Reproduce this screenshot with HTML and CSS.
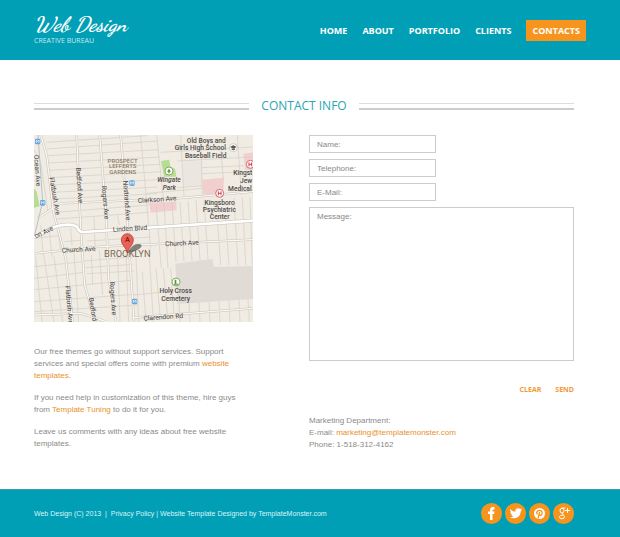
FILE: index.html
```html
<!DOCTYPE html>
<html lang="en">
<head>
<meta charset="utf-8">
<title>Web Design - Contacts</title>
<link rel="stylesheet" href="styles.css">
</head>
<body>
<header class="header">
  <a class="brand" href="#">
    <span class="brand-name">Web Design</span>
    <span class="brand-tag">CREATIVE BUREAU</span>
  </a>
  <nav class="nav">
    <a href="#">HOME</a>
    <a href="#">ABOUT</a>
    <a href="#">PORTFOLIO</a>
    <a href="#">CLIENTS</a>
    <a class="current" href="#">CONTACTS</a>
  </nav>
</header>

<main class="main">
  <h1 class="title">CONTACT INFO</h1>
  <div class="columns">
    <section>
      <svg class="map" viewBox="0 0 657 561" role="img" aria-label="Map of Brooklyn">
        <rect width="657" height="561" fill="#f0ece3"/>
        <g fill="#e0dcd5"><path d="M424 386L535 372L540 396L657 393V492L430 507Z"/><path d="M448 72L505 78V150L448 155Z" fill="#ebe6df"/></g>
        <g fill="#b9dc95"><path d="M381 78L405 74L410 96L423 101L427 125L390 125Z"/><path d="M0 160L8 170L17 214L0 218Z"/></g>
        <g fill="#f1cfcf"><path d="M505 134L570 128L568 176L508 178Z"/><path d="M345 203L427 199L428 226L350 233Z"/><path d="M628 56L657 52V106L634 104Z"/></g>
        <g fill="none" stroke="#d3cdc4" stroke-width="2">
          <path d="M35 22L340 2M38 42L370 18M40 62L375 44M42 84L376 66M44 106L378 88M46 128L382 110M50 150L380 134M54 172L372 156M58 192L370 176M64 232L345 210M68 252L345 232M160 318L350 306"/>
          <path d="M320 0L350 340M368 0L388 190M440 0L450 185M500 0L505 180M560 40L568 130M610 0L622 180M380 52L657 36M430 78L650 66M505 98L630 92M505 116L630 110M430 158L505 152M340 175L505 160"/>
          <path d="M366 210L382 400M390 205L402 400M414 202L426 380M438 200L450 380M462 198L474 378M486 196L498 376M510 194L522 374M550 250L560 390M575 250L585 390M600 190L612 390M625 188L635 390M648 188L655 390"/>
          <path d="M305 340L314 561M325 410L336 561M345 340L358 561M366 400L378 540M388 400L400 540M410 400L420 540M435 507L438 561M465 505L468 561M495 503L498 561M525 501L528 561M555 499L558 561M585 497L588 561M615 495L618 561M642 493L646 561"/>
          <path d="M172 360L176 450M196 345L206 480M250 340L258 561M276 350L284 561M30 365L60 561M60 365L86 561M5 365L24 561M120 350L134 561M0 395L150 380M0 430L150 412M0 464L290 436M0 500L300 478M0 530L310 510M150 378L295 366M155 398L295 388M158 416L300 408M300 480L420 468M0 310L75 302M90 320L140 316"/>
          <path d="M20 270L28 365M45 280L54 365M72 275L80 350M110 280L114 330M0 45L20 80L42 230M180 245L184 350M250 240L256 270"/>
        </g>
        <g fill="none" stroke="#c6c0b7" stroke-width="7">
          <path d="M20 0L38 60L58 230L95 370L116 561M128 0L140 280L152 450L184 561M197 0L216 240L224 430L246 561M260 0L280 260L300 561M0 355L200 335L657 314M10 250L80 205L430 190L657 170M0 540L140 535L220 561M300 548L657 520"/>
        </g>
        <g fill="none" stroke="#faf8f3" stroke-width="4">
          <path d="M20 0L38 60L58 230L95 370L116 561M128 0L140 280L152 450L184 561M197 0L216 240L224 430L246 561M260 0L280 260L300 561M0 355L200 335L657 314M10 250L80 205L430 190L657 170M0 540L140 535L220 561M300 548L657 520"/>
        </g>
        <path d="M0 308L60 276Q110 262 130 276Q134 292 150 291L657 257" fill="none" stroke="#c6c0b7" stroke-width="11"/>
        <path d="M0 308L60 276Q110 262 130 276Q134 292 150 291L657 257" fill="none" stroke="#fff" stroke-width="8"/>
        <path d="M12 0L26 200L2 300" fill="none" stroke="#b5c5bf" stroke-width="3"/>
        <g>
          <g fill="#67a5df"><rect x="3" y="11" width="16" height="17" rx="4"/><rect x="286" y="136" width="16" height="17" rx="4"/><rect x="18" y="195" width="16" height="17" rx="4"/><rect x="294" y="491" width="16" height="17" rx="4"/></g>
          <path d="M7 24V15L11 20L15 15V24M290 149V140L294 145L298 140V149M22 208V199L26 204L30 199V208M298 504V495L302 500L306 495V504" fill="none" stroke="#fff" stroke-width="2"/>
        </g>
        <g class="place">
          <text x="517" y="24">Old Boys and</text><text x="499" y="46">Girls High School</text><text x="515" y="68">Baseball Field</text>
          <text class="park" x="405" y="141">Wingate</text><text class="park" x="406" y="164">Park</text>
          <text x="557" y="210">Kingsboro</text><text x="556" y="232">Psychiatric</text><text x="557" y="253">Center</text>
          <text x="425" y="475">Holy Cross</text><text x="425" y="498">Cemetery</text>
          <text class="end" x="655" y="120">Kingst</text><text class="end" x="655" y="144">Jew</text><text class="end" x="653" y="167">Medical</text>
        </g>
        <g class="road">
          <text transform="translate(312 204) rotate(-4)">Clarkson Ave</text>
          <text transform="translate(237 290) rotate(-3)">Linden Blvd</text>
          <text transform="translate(84 353) rotate(-3)">Church Ave</text>
          <text transform="translate(394 334) rotate(-3)">Church Ave</text>
          <text transform="translate(329 557) rotate(-4)">Clarendon Rd</text>
          <text transform="translate(5 310) rotate(-25)">on Ave</text>
          <text transform="translate(46 128) rotate(80)">Flatbush Ave</text>
          <text transform="translate(126 98) rotate(86)">Bedford Ave</text>
          <text transform="translate(203 153) rotate(85)">Rogers Ave</text>
          <text transform="translate(268 137) rotate(86)">Nostrand Ave</text>
          <text transform="translate(0 60) rotate(86)">Ocean Ave</text>
          <text transform="translate(94 453) rotate(85)">Flatbush Ave</text>
          <text transform="translate(164 490) rotate(80)">Bedford</text>
          <text transform="translate(227 441) rotate(86)">Rogers Ave</text>
        </g>
        <g class="district"><text x="266" y="84">PROSPECT</text><text x="266" y="100">LEFFERTS</text><text x="266" y="116">GARDENS</text></g>
        <text class="city" x="280" y="367">BROOKLYN</text>
        <g fill="#fff" stroke-width="3">
          <circle cx="405" cy="108" r="12" stroke="#83ae5d"/><circle cx="426" cy="441" r="12" stroke="#83ae5d"/>
          <circle cx="557" cy="175" r="12" stroke="#d4656b"/><circle cx="649" cy="88" r="12" stroke="#d4656b"/>
          <circle cx="598" cy="38" r="12" stroke="#b9b4ad" stroke-width="2"/>
        </g>
        <path d="M405 101L399 110H411ZM403 110H407V115H403Z" fill="#5f9540"/>
        <path d="M422 434V446H427V434ZM426 446H433V449H420V446Z" fill="#5f9540"/>
        <path d="M553 169V181M561 169V181M553 175H561M645 82V94M653 82V94M645 88H653" stroke="#c93f49" stroke-width="3"/>
        <path d="M588 36L598 31L608 36L598 41ZM593 40L598 43L603 40V44L598 46L593 44Z" fill="#57534e"/>
        <path d="M280 354Q290 334 306 328Q325 324 322 336Q310 350 280 354Z" fill="#4b4845" opacity=".65"/>
        <path d="M280 354C277 337 262 331 262 314A18 18 0 0 1 298 314C298 331 283 337 280 354Z" fill="#ed6055" stroke="#a5312b" stroke-width="2"/>
        <text class="pin" x="280" y="321">A</text>
      </svg>
      <div class="copy">
        <p>Our free themes go without support services. Support services and special offers come with premium <a href="#">website templates</a>.</p>
        <p>If you need help in customization of this theme, hire guys from <a href="#">Template Tuning</a> to do it for you.</p>
        <p>Leave us comments with any ideas about free website templates.</p>
      </div>
    </section>
    <section>
      <form class="form">
        <input type="text" aria-label="Name" placeholder="Name:">
        <input type="tel" aria-label="Telephone" placeholder="Telephone:">
        <input type="email" aria-label="E-Mail" placeholder="E-Mail:">
        <textarea aria-label="Message" placeholder="Message:"></textarea>
        <div class="actions">
          <button type="reset">CLEAR</button>
          <button type="submit">SEND</button>
        </div>
      </form>
      <address class="address">
        Marketing Department:<br>
        E-mail: <a href="#">marketing@templatemonster.com</a><br>
        Phone: 1-518-312-4162
      </address>
    </section>
  </div>
</main>

<footer class="footer">
  <p>Web Design (C) 2013 &nbsp;|&nbsp; <a href="#">Privacy Policy</a> | Website Template Designed by <a href="#">TemplateMonster.com</a></p>
  <div class="social">
    <a href="#" aria-label="Facebook"><svg viewBox="0 0 21 21"><path d="M9 17V11H7V8.500H9V7Q9 4 12 4H13.500V6.500H12.500Q11.500 6.500 11.500 7.500V8.500H13.500L13.200 11H11.500V17Z" fill="#fff"/></svg></a>
    <a href="#" aria-label="Twitter"><svg viewBox="0 0 21 21"><path d="M5 6Q7 8.500 10.300 8.700Q10 5.500 13 5.300Q14.200 5.300 15 6.100L16.700 5.500L15.900 6.900L17 6.800L15.800 8.200Q15.700 12 13 14Q9.500 16.300 5 14.300Q7.300 14.300 8.500 13.200Q6.700 13 6.200 11.500H7.300Q5.300 10.700 5.200 9L6.300 9.200Q4.300 7.600 5 6Z" fill="#fff"/></svg></a>
    <a href="#" aria-label="Pinterest"><svg viewBox="0 0 21 21"><circle cx="10.500" cy="10.500" r="5.500" fill="#fff"/><path d="M8.300 11.500Q7 9.500 8.600 8.100Q10.500 6.700 12.500 8Q13.800 9.500 12.700 11.500Q11.500 13 10.200 11.800M10.700 9L9 15.500" fill="none" stroke="#f7941e" stroke-width="1.300"/></svg></a>
    <a href="#" aria-label="Google Plus"><svg viewBox="0 0 21 21"><g fill="none" stroke="#fff"><ellipse cx="9" cy="7.600" rx="2" ry="2.400"/><path d="M12.500 5H9M10 10Q8.500 10.800 10.200 11.800Q12.300 13.300 11 15Q9 16.500 7 15.200Q5.500 13.500 7.500 12.500L9.800 12.200M14.500 5V10M12 7.500H17"/></g></svg></a>
  </div>
</footer>
</body>
</html>
```
FILE: styles.css
```css
* {
  box-sizing: border-box;
}

body {
  min-height: 100vh;
  margin: 0;
  display: flex;
  flex-direction: column;
  background: #fff;
  color: #8a8a8a;
  font: 8px/12px "Liberation Sans", Arial, sans-serif;
}

a {
  color: #e8912a;
  text-decoration: none;
}

p {
  margin: 0;
}

.header {
  display: flex;
  align-items: center;
  justify-content: space-between;
  min-height: 60px;
  padding: 0 34px;
  background: #009fb6;
}

.brand {
  display: flex;
  flex-direction: column;
  color: #fff;
}

.brand-name {
  font: italic bold 21px/22px "Dancing Script", cursive;
}

.brand-tag {
  color: #c3eaf0;
  font: 7px/10px "Open Sans", sans-serif;
}

.nav {
  display: flex;
  align-items: center;
  gap: 15px;
  font: bold 9px/21px "Open Sans", sans-serif;
}

.nav a {
  color: #fff;
}

.nav .current {
  padding: 0 6px;
  background: #f7941e;
}

.main {
  flex: 1;
  padding: 37px 46px 24px 34px;
}

.title {
  display: flex;
  align-items: center;
  gap: 12px;
  margin: 0 0 20px;
  color: #2ba5b0;
  font: 12px/18px "Open Sans", sans-serif;
}

.title::before,
.title::after {
  content: "";
  flex: 1;
  height: 7px;
  border-top: 1px solid #ddd;
  border-bottom: 2px solid #ccc;
  box-sizing: border-box;
}

.columns {
  display: grid;
  grid-template-columns: 219fr 265fr;
  gap: 56px;
}

.map {
  display: block;
  width: 100%;
  height: auto;
}

.map text {
  font-family: Roboto, sans-serif;
}

.place text {
  fill: #4d4a48;
  font-size: 20px;
  font-weight: 500;
  text-anchor: middle;
}

.place .park {
  font-style: italic;
}

.place .end {
  text-anchor: end;
}

.road text {
  fill: #45423f;
  font-size: 20px;
}

.district text {
  fill: #8c7d66;
  font-size: 18px;
  font-weight: 500;
  text-anchor: middle;
}

.map .city {
  fill: #7d6b55;
  font-size: 28px;
  text-anchor: middle;
}

.map .pin {
  fill: #3a0906;
  font-size: 22px;
  text-anchor: middle;
}

.copy {
  display: flex;
  flex-direction: column;
  gap: 10px;
  margin-top: 24px;
}

.form {
  display: flex;
  flex-direction: column;
  align-items: flex-start;
  gap: 6px;
}

.form input,
.form textarea {
  margin: 0;
  border: 1px solid #ccc;
  border-radius: 0;
  padding: 0 7px;
  background: #fff;
  color: #888;
  font: inherit;
  outline: 0;
}

.form input {
  width: 48%;
  height: 18px;
}

.form textarea {
  width: 100%;
  height: 154px;
  padding: 3px 7px;
  resize: none;
}

.form ::placeholder {
  color: #888;
  opacity: 1;
}

.actions {
  display: flex;
  align-self: flex-end;
  gap: 14px;
  margin-top: 16px;
}

.actions button {
  border: 0;
  padding: 0;
  background: none;
  color: #f09a35;
  font: bold 7px/14px "Open Sans", sans-serif;
}

.address {
  margin-top: 18px;
  font-style: normal;
}

.footer {
  display: flex;
  align-items: center;
  justify-content: space-between;
  min-height: 48px;
  padding: 0 46px 0 34px;
  border-top: 1px solid #3b9eab;
  background: #009fb6;
  color: #d9f3f6;
  font-size: 7px;
}

.footer a {
  color: inherit;
}

.social {
  display: flex;
  gap: 3px;
}

.social a {
  width: 21px;
  height: 21px;
  border-radius: 50%;
  background: #f7941e;
}

.social svg {
  display: block;
}
```
